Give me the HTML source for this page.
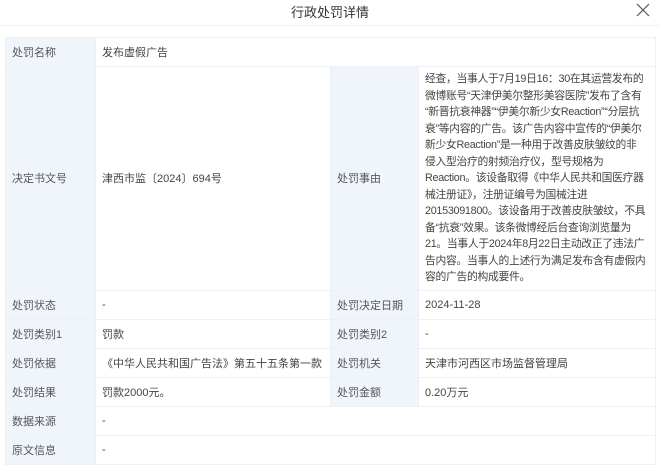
<!DOCTYPE html>
<html><head><meta charset="utf-8"><style>
body{margin:0;width:660px;height:468px;background:#fff;font-family:"Liberation Sans","Noto Sans CJK SC",sans-serif;color:#333;overflow:hidden;position:relative}
.title{position:absolute;top:0;left:0;width:660px;height:25px;line-height:25px;text-align:center;font-size:13px;color:#333}
.close{position:absolute;right:10px;top:3px;width:14px;height:14px}
.hr{position:absolute;top:25px;left:0;width:660px;height:1px;background:#f2f2f2}
table{position:absolute;left:5px;top:37px;width:650px;border-collapse:collapse;font-size:11px;table-layout:fixed}
td{border:1px solid #edf0f4;padding:0 6px;height:28px;vertical-align:middle;color:#444;white-space:nowrap;overflow:hidden}
td.l{background:#f0f5fb;color:#555}
td.l2{background:#f0f5fb;color:#555}
td.r{line-height:16.5px;padding:4px 4px 4px 6px;letter-spacing:-0.3px;font-size:10.8px}
</style></head><body>
<div class="title">行政处罚详情</div>
<svg class="close" viewBox="0 0 14 14"><path d="M1 1L13 13M13 1L1 13" stroke="#555" stroke-width="1.2"/></svg>
<div class="hr"></div>
<table>
<colgroup><col style="width:90px"><col style="width:235px"><col style="width:88px"><col style="width:237px"></colgroup>
<tr><td class="l">处罚名称</td><td colspan="3">发布虚假广告</td></tr>
<tr><td class="l">决定书文号</td><td>津西市监〔2024〕694号</td><td class="l2">处罚事由</td><td class="r">经查，当事人于7月19日16：30在其运营发布的<br>微博账号“天津伊美尔整形美容医院”发布了含有<br>“新晋抗衰神器”“伊美尔新少女Reaction”“分层抗<br>衰”等内容的广告。该广告内容中宣传的“伊美尔<br>新少女Reaction”是一种用于改善皮肤皱纹的非<br>侵入型治疗的射频治疗仪，型号规格为<br>Reaction。该设备取得《中华人民共和国医疗器<br>械注册证》，注册证编号为国械注进<br>20153091800。该设备用于改善皮肤皱纹，不具<br>备“抗衰”效果。该条微博经后台查询浏览量为<br>21。当事人于2024年8月22日主动改正了违法广<br>告内容。当事人的上述行为满足发布含有虚假内<br>容的广告的构成要件。</td></tr>
<tr><td class="l">处罚状态</td><td>-</td><td class="l2">处罚决定日期</td><td>2024-11-28</td></tr>
<tr><td class="l">处罚类别1</td><td>罚款</td><td class="l2">处罚类别2</td><td>-</td></tr>
<tr><td class="l">处罚依据</td><td>《中华人民共和国广告法》第五十五条第一款</td><td class="l2">处罚机关</td><td>天津市河西区市场监督管理局</td></tr>
<tr><td class="l">处罚结果</td><td>罚款2000元。</td><td class="l2">处罚金额</td><td>0.20万元</td></tr>
<tr><td class="l">数据来源</td><td colspan="3">-</td></tr>
<tr><td class="l">原文信息</td><td colspan="3">-</td></tr>
</table>
</body></html>
